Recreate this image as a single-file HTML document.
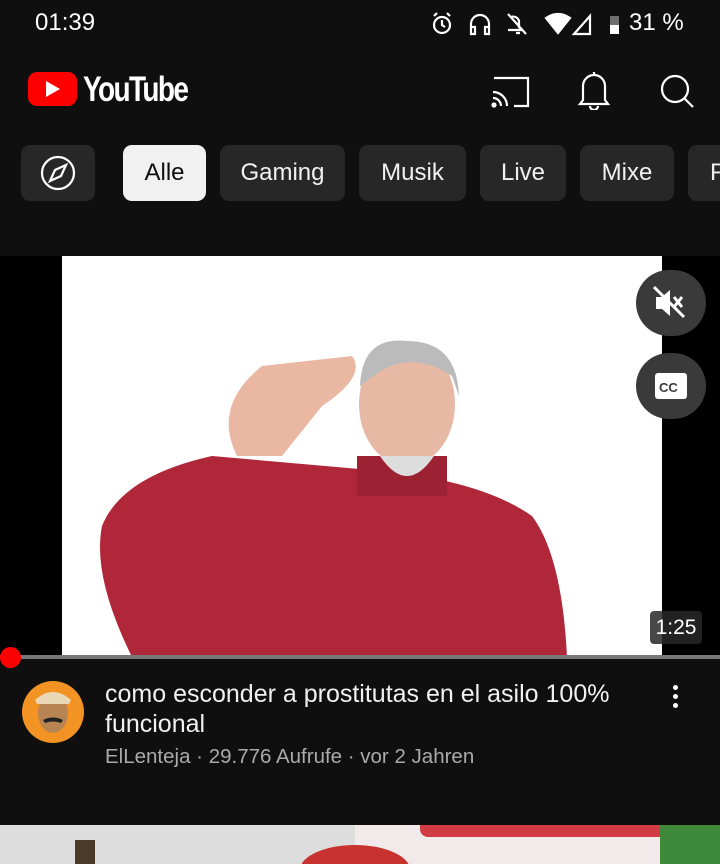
<!DOCTYPE html>
<html><head><meta charset="utf-8"><style>
*{margin:0;padding:0;box-sizing:border-box}
body{width:720px;height:864px;background:#0f0f0f;font-family:"Liberation Sans",sans-serif;color:#fff;position:relative;overflow:hidden}
.abs{position:absolute;white-space:nowrap}
.chip{position:absolute;top:145px;height:56px;border-radius:9px;background:#272727;font-size:24px;line-height:56px;text-align:center;color:#f1f1f1}
</style></head><body>
<div class="abs" style="left:35px;top:9px;font-size:24px;">01:39</div>
<svg class="abs" style="left:428px;top:10px" width="200" height="30" viewBox="0 0 200 30" fill="none" stroke="#fff" stroke-width="2.2">
<circle cx="14" cy="15" r="8"/><path d="M14 10v5l3 2M6 6l3-3M22 6l-3-3"/>
<path d="M43 22v-8a9 9 0 0 1 18 0v8M43 17h4v7h-4zM57 17h4v7h-4z"/>
<path d="M83 7a6 6 0 0 1 8 4v6l3 3H80M80 4l18 20M88 23h4"/>
<path d="M118 8 q12-8 24 0 l-12 15z" fill="#fff"/>
<path d="M146 24l16-18v18z"/>
<rect x="182" y="6" width="9" height="18" fill="#fff" stroke="none" opacity=".4"/><rect x="182" y="15" width="9" height="9" fill="#fff" stroke="none"/>
</svg>
<div class="abs" style="left:629px;top:9px;font-size:24px">31 %</div>
<!-- logo -->
<div class="abs" style="left:28px;top:72px;width:49px;height:34px;background:#f00;border-radius:9px"></div>
<div class="abs" style="left:46px;top:81px;width:0;height:0;border-left:14px solid #fff;border-top:8px solid transparent;border-bottom:8px solid transparent"></div>
<div class="abs" style="left:83px;top:70px;font-size:35px;font-weight:bold;letter-spacing:-2px;transform:scaleX(.8);transform-origin:left">YouTube</div>
<svg class="abs" style="left:488px;top:70px" width="210" height="40" fill="none" stroke="#fff" stroke-width="2.2">
<path d="M6 8h34v28h-14"/><path d="M5 22a14 14 0 0 1 14 14M5 28a8 8 0 0 1 8 8"/><circle cx="6" cy="35" r="1.5" fill="#fff"/>
<path d="M95 30V16a11 11 0 0 1 22 0v14l3 4H92zM106 2v4M102 36a4 4 0 0 0 8 0"/>
<circle cx="187" cy="19" r="13"/><path d="M196 28l9 9"/>
</svg>
<!-- chips -->
<div class="chip" style="left:21px;width:74px"><svg width="40" height="40" style="margin-top:8px" fill="none" stroke="#fff" stroke-width="2.2"><circle cx="20" cy="20" r="16"/><path d="M28 12l-5 11-11 5 5-11z"/></svg></div>
<div class="chip" style="left:123px;width:83px;background:#f1f1f1;color:#0f0f0f">Alle</div>
<div class="chip" style="left:220px;width:125px">Gaming</div>
<div class="chip" style="left:359px;width:107px">Musik</div>
<div class="chip" style="left:480px;width:86px">Live</div>
<div class="chip" style="left:580px;width:94px">Mixe</div>
<div class="chip" style="left:688px;width:60px;text-align:left;padding-left:22px">F</div>
<!-- video -->
<div class="abs" style="left:0;top:256px;width:720px;height:401px;background:#000"></div>
<div class="abs" style="left:62px;top:256px;width:600px;height:401px;background:#fff;overflow:hidden">
<svg width="600" height="401">
<path d="M40 270 Q60 220 150 200 L320 215 Q420 225 470 260 Q500 300 505 401 L70 401 Q30 320 40 270z" fill="#b0273a"/>
<path d="M175 200 Q150 150 200 110 L290 100 Q305 120 260 150 L220 200z" fill="#e9b7a2"/>
<rect x="295" y="200" width="90" height="40" fill="#9c2233"/>
<ellipse cx="345" cy="148" rx="48" ry="62" fill="#e7b9a5"/>
<path d="M298 130 Q300 80 345 85 Q395 85 397 140 L390 120 Q345 90 305 125z" fill="#bbb"/>
<path d="M318 200 Q345 240 372 200" fill="#ddd"/>
</svg></div>
<div class="abs" style="left:636px;top:270px;width:70px;height:66px;border-radius:33px;background:#3a3a3a"></div>
<div class="abs" style="left:636px;top:353px;width:70px;height:66px;border-radius:33px;background:#3a3a3a"></div>
<svg class="abs" style="left:652px;top:285px" width="40" height="120" fill="#fff">
<path d="M4 12h6l8-7v26l-8-7H4z"/><path d="M2 2l30 30" stroke="#fff" stroke-width="3"/><path d="M22 12l8 10M30 12l-8 10" stroke="#fff" stroke-width="3"/>
<rect x="3" y="88" width="32" height="26" rx="3"/><text x="7" y="107" font-size="13" font-weight="bold" fill="#3a3a3a" font-family="Liberation Sans">CC</text>
</svg>
<div class="abs" style="left:650px;top:611px;width:52px;height:33px;background:rgba(40,40,40,.85);border-radius:4px;font-size:21px;line-height:33px;text-align:center">1:25</div>
<div class="abs" style="left:0;top:655px;width:720px;height:4px;background:#777"></div>
<div class="abs" style="left:0;top:647px;width:21px;height:21px;border-radius:50%;background:#f00"></div>
<!-- info -->
<svg class="abs" style="left:21px;top:680px" width="64" height="64"><circle cx="32" cy="32" r="31" fill="#f39323"/><ellipse cx="32" cy="33" rx="15" ry="20" fill="#b98454"/><path d="M14 20 Q32 4 50 20 L48 24 H16z" fill="#e9d7b6"/><path d="M22 40 Q32 35 42 40 L40 43 Q32 40 24 43z" fill="#222"/></svg>
<div class="abs" style="left:105px;top:679px;font-size:25px;line-height:30px;color:#f1f1f1;white-space:normal;width:540px">como esconder a prostitutas en el asilo 100% funcional</div>
<div class="abs" style="left:105px;top:745px;font-size:20.5px;color:#aaa">ElLenteja · 29.776 Aufrufe · vor 2 Jahren</div>
<div class="abs" style="left:673px;top:685px;width:5px;height:5px;border-radius:50%;background:#fff;box-shadow:0 9px #fff,0 18px #fff"></div>
<!-- next thumb -->
<div class="abs" style="left:0;top:825px;width:720px;height:39px;background:#ddd;overflow:hidden">
<div class="abs" style="left:355px;top:0;width:330px;height:39px;background:#f2e9ea"></div>
<div class="abs" style="left:420px;top:0;width:250px;height:12px;background:#d23a44;border-radius:0 0 8px 8px"></div>
<div class="abs" style="left:300px;top:20px;width:110px;height:50px;border-radius:50%;background:#c9332f"></div>
<div class="abs" style="left:660px;top:0;width:60px;height:39px;background:#3e8a3a"></div>
<div class="abs" style="left:75px;top:15px;width:20px;height:24px;background:#4a3a2a"></div>
</div>
</body></html>
